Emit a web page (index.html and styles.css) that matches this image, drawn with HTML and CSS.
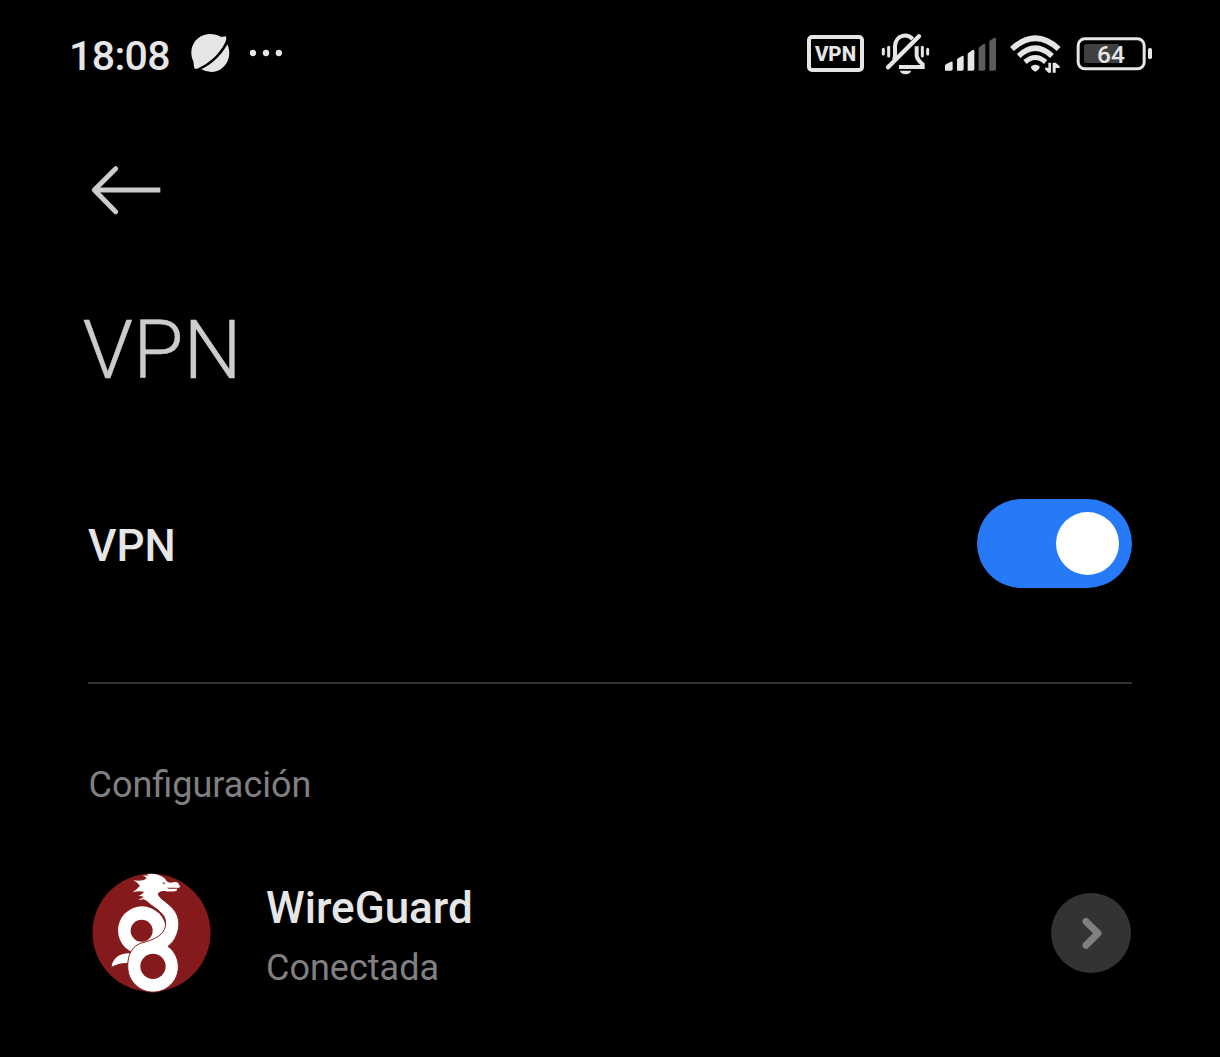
FILE: index.html
```html
<!DOCTYPE html>
<html lang="es">
<head>
<meta charset="utf-8">
<title>VPN</title>
<link rel="stylesheet" href="styles.css">
</head>
<body>
<header class="status">
  <span class="time">18:08</span>
  <svg class="planet" viewBox="393 42 117 120"><path d="M404 146 C400 138 402 130 400 124 C382 84 408 42 450 42 C463 42 473 45 482 50 Q491 51 498 49 Q501 58 496 67 C478 103 446 132 412 146 Z"/><path d="M424 148 C458 132 486 103 502 73 C520 112 494 156 455 156 Q438 156 424 148 Z"/></svg>
  <svg class="dots" viewBox="567 42 102 120"><circle cx="579" cy="99" r="9.5"/><circle cx="618" cy="99" r="9.5"/><circle cx="656.500" cy="99" r="9.500"/></svg>
  <div class="indicators">
    <span class="badge">VPN</span>
    <svg class="bell" viewBox="243 27 147 120">
      <g class="line"><path d="M282 105 C288 92 284 78 285 63 C288 30 320 24 338 42" stroke-width="12"/><path d="M350 64 V92 Q352 105 368 118 V126 H297" stroke-width="12"/><path d="M264 127 L357 34" stroke-width="13" stroke-linecap="round"/><path d="M250 73 V87 M266 67 V93 M367 67 V93 M383 73 V87" stroke-width="9" stroke-linecap="round"/></g>
      <path d="M299 137 H334 C329 151 305 151 299 137Z"/>
    </svg>
    <svg class="signal" viewBox="30 27 153 120"><path d="M30 123 Q30 119 34 117 L48 110 Q53 108 53 113 V132 Q53 137 48 137 H30Z M66 105 Q66 102 69 100 L81 93 Q86 91 86 97 V132 Q86 137 81 137 H66Z M98 88 Q98 85 101 83 L113 75 Q118 73 118 79 V132 Q118 137 113 137 H98Z"/><path class="dim" d="M131 70 Q131 67 134 65 L146 57 Q151 55 151 61 V132 Q151 137 146 137 H131Z M163 51 Q163 48 166 46 L178 38 Q183 36 183 42 V132 Q183 137 178 137 H163Z"/></svg>
    <svg class="wifi" viewBox="225 27 153 120"><g class="line" stroke-width="17"><path d="M231 72 Q301 8 371 72"/><path d="M251 93 Q301 46 351 93" stroke-width="16"/><path d="M270 111 Q301 84 332 111" stroke-width="15"/></g><path d="M288 128 Q287 124 291 122 Q301 116 311 122 Q315 124 314 128 Q310 136 301 140 Q291 136 288 128Z"/><path d="M340 113 H348 V143 H340 L330 133 V128 H340Z M353 113 H362 L374 124 V129 H362 V143 H353Z"/></svg>
    <div class="battery"><svg viewBox="33 27 231 120"><rect class="line" x="39.500" y="41.500" width="198" height="90" rx="20" stroke-width="9"/><path class="charge" d="M64 57 H161 V114 H64 Q57 114 57 107 V64 Q57 57 64 57Z"/><rect x="249" y="69" width="12" height="33" rx="5"/></svg><span class="level">64</span></div>
  </div>
</header>
<main class="page">
  <svg class="back" viewBox="60 45 216 150"><path d="M137 56 L73 120 L137 185" stroke-linecap="round" stroke-linejoin="round"/><path d="M73 120 H271"/></svg>
  <h1 class="title">VPN</h1>
  <div class="setting"><span class="label">VPN</span><span class="switch"><span class="knob"></span></span></div>
  <h2 class="section">Configuración</h2>
  <div class="connection">
    <svg class="logo" viewBox="36 22 357 357">
      <circle class="red" cx="214.500" cy="201" r="177"/>
      <path class="white" d="M95 303 C97 281 116 262 150 263 L143 292 C125 291 110 296 95 303Z"/>
      <circle class="white" cx="186" cy="194" r="72"/>
      <circle class="red" cx="185" cy="195" r="33"/>
      <path class="white outline" d="M198 98 L233 84 C237 99 265 111 280 130 C300 154 300 183 290 207 C284 224 275 233 264 242 A76 76 0 1 1 144 315 C140 275 152 238 192 230 C240 217 261 197 256 164 C252 136 213 124 196 102Z"/>
      <path class="white" d="M174 103 L192 94 Q183 90 175 91 Q190 84 192 78 Q174 74 158 80 Q172 70 180 60 Q170 48 160 44 Q178 47 192 43 L200 38 Q194 30 187 28 Q200 31 207 29 L200 25 Q233 20 255 39 Q261 51 273 51 Q285 47 294 51 L301 64 L291 68 L290 75 Q273 80 254 76 Q237 75 233 86 Q239 101 257 110 L230 123 L198 104 L190 101Z"/>
      <circle class="red" cx="219" cy="302" r="38"/>
      <path class="red" d="M246 49 L257 53 L251 55Z M260 66 L291 66 L290 69 L266 69Z"/>
    </svg>
    <div class="details"><span class="label">WireGuard</span><span class="state">Conectada</span></div>
    <span class="more"><svg viewBox="0 0 80 80"><path d="M35 28.500 L47 40.300 L35 52.200"/></svg></span>
  </div>
</main>
</body>
</html>
```
FILE: styles.css
```css
body { margin: 0; background: #000; color: #e6e6e6; font-family: Roboto, "Liberation Sans", sans-serif; height: 1057px; overflow: hidden; }
svg { display: block; flex: none; fill: #e6e6e6; overflow: visible; }
.line { fill: none; stroke: #e6e6e6; }
.status { box-sizing: border-box; height: 108px; padding: 0 67px 0 69px; display: flex; align-items: center; }
.time { width: 122px; font-size: 41px; font-weight: 500; line-height: 48px; letter-spacing: -0.6px; padding-top: 4px; box-sizing: border-box; }
.planet { width: 39px; height: 40px; }
.dots { width: 34px; height: 40px; margin-left: 19px; }
.indicators { margin-left: auto; display: flex; align-items: center; }
.badge { box-sizing: border-box; width: 57px; height: 37px; border: 4px solid #e6e6e6; border-radius: 5px; font-size: 20.5px; font-weight: 800; line-height: 30px; text-align: center; margin: 0 17px 1px 0; }
.bell { width: 49px; height: 40px; margin-right: 15px; }
.signal { width: 51px; height: 40px; margin-right: 14px; }
.dim { fill: #5c5c5c; }
.wifi { width: 51px; height: 40px; margin-right: 15px; }
.battery { display: grid; width: 77px; height: 40px; }
.battery svg { width: 77px; height: 40px; grid-area: 1 / 1; }
.charge { fill: #404040; }
.level { grid-area: 1 / 1; width: 70px; font-size: 24.5px; font-weight: 500; line-height: 42px; text-align: center; }
.page { padding: 57px 88px 0; }
.back { width: 72px; height: 50px; margin-left: 2px; }
.back path { fill: none; stroke: #ccc; stroke-width: 15; }
.title { margin: 86px 0 0 -5.5px; font-size: 82px; font-weight: 300; line-height: 98px; color: #ccc; -webkit-text-stroke: 0.4px #ccc; }
.setting { display: flex; align-items: center; justify-content: space-between; height: 283px; border-bottom: 2px solid #333; box-sizing: border-box; padding-top: 4px; margin-top: 2px; }
.label { font-size: 44px; font-weight: 500; line-height: 52px; }
.setting .label { padding-top: 5px; }
.switch { box-sizing: border-box; width: 155px; height: 89px; border-radius: 45px; background: #277af7; padding: 13px; display: flex; justify-content: flex-end; }
.knob { width: 63px; height: 63px; border-radius: 50%; background: #fff; }
.section { margin: 79px 0 0 0.5px; font-size: 36px; font-weight: 400; line-height: 44px; color: #808080; }
.connection { display: flex; align-items: center; height: 120px; margin-top: 65px; }
.logo { width: 119px; height: 119px; margin-left: 4px; }
.red { fill: #851a1c; }
.white { fill: #fff; }
.outline { stroke: #851a1c; stroke-width: 3; }
.details { display: flex; flex-direction: column; margin-left: 55px; padding-top: 8px; }
.state { font-size: 36px; line-height: 44px; color: #808080; margin-top: 12px; }
.more { margin: 1px 1px 0 auto; width: 80px; height: 80px; border-radius: 50%; background: #333; }
.more path { fill: none; stroke: #808080; stroke-width: 7; stroke-linecap: round; stroke-linejoin: round; }
```
